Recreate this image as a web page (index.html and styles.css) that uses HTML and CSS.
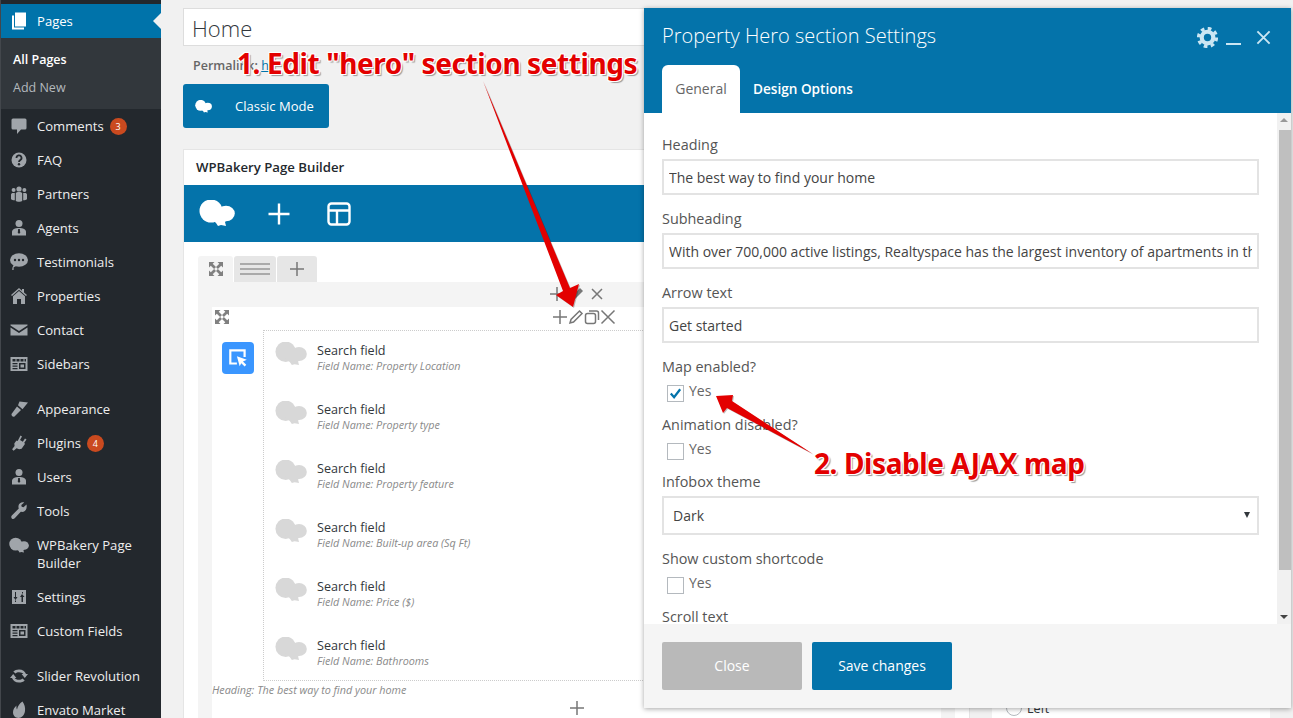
FILE: index.html
```html
<!DOCTYPE html>
<html lang="en">
<head>
<meta charset="utf-8">
<title>Edit Page</title>
<link rel="stylesheet" href="styles.css">
</head>
<body>
<svg class="sprite" aria-hidden="true">
  <symbol id="i-cloud" viewBox="0 0 36 27"><circle cx="12" cy="11" r="11.5"/><ellipse cx="27" cy="13.5" rx="8.8" ry="7.8"/><path d="M12 18h18l-4 4 1 4-5-1-3 1-2-3z"/></symbol>
  <symbol id="i-pages" viewBox="0 0 20 20"><path d="M6 1.500h11v14H6z"/><path d="M3 4.500h2V16.500h10v2H3z"/></symbol>
  <symbol id="i-comments" viewBox="0 0 20 20"><path d="M4 2.500h12a1.500 1.500 0 0 1 1.500 1.500v8a1.500 1.500 0 0 1-1.500 1.500h-4l-4 4.500v-4.500H4A1.500 1.500 0 0 1 2.500 12V4A1.500 1.500 0 0 1 4 2.500z"/></symbol>
  <symbol id="i-faq" viewBox="0 0 20 20"><circle cx="10" cy="10" r="7.500"/><path class="cut" d="M7.500 8a2.500 2.500 0 1 1 3.700 2.100c-.9.500-1.200 1-1.200 1.900"/><circle class="dot" cx="10" cy="14.300" r="1.200"/></symbol>
  <symbol id="i-partners" viewBox="0 0 20 20"><circle cx="10" cy="5" r="2.600"/><circle cx="4.600" cy="6" r="2"/><circle cx="15.400" cy="6" r="2"/><path d="M6.800 9.500c0-1 1.200-1.500 3.200-1.500s3.200.5 3.200 1.500V17c-1 1-5.400 1-6.400 0z"/><path d="M5.800 9v7.300c-1.800 0-3.300-.5-3.800-1V10.500C2 9.200 3.200 8.600 5.800 9zM14.200 9v7.300c1.800 0 3.300-.5 3.800-1V10.500c0-1.300-1.200-1.900-3.800-1.500z"/></symbol>
  <symbol id="i-agent" viewBox="0 0 20 20"><circle cx="10" cy="5.500" r="3.500"/><path d="M3 17.500V14c0-2.700 3-4 7-4s7 1.300 7 4v3.500z"/><path class="cut-fill" d="M9.200 11h1.600l.4 3.500-1.200 1.500-1.200-1.500z"/></symbol>
  <symbol id="i-bubble" viewBox="0 0 20 20"><ellipse cx="10" cy="8" rx="9" ry="6.800"/><path d="M5 12l2 2-2.500 1.500.3 2.300-1.600.2.300-2.500z"/><circle class="dot" cx="6" cy="8" r="1.200"/><circle class="dot" cx="10" cy="8" r="1.200"/><circle class="dot" cx="14" cy="8" r="1.200"/></symbol>
  <symbol id="i-house" viewBox="0 0 20 20"><path d="M4 10.300l6-5.300 6 5.300V18H12v-5H8v5H4z"/><path d="M10 2L2 9l1 1 7-6.200L17 10l1-1-3-2.600V3h-2v1.700z"/></symbol>
  <symbol id="i-mail" viewBox="0 0 20 20"><path d="M1.500 4.500h17v1L10 11 1.500 5.500z"/><path d="M1.500 7.500L10 13l8.500-5.500v8h-17z"/></symbol>
  <symbol id="i-table" viewBox="0 0 20 20"><path fill-rule="evenodd" d="M1.500 3h17v14h-17zM3.500 5v2.500h3V5zm4 0v2.500h3V5zm4 0v2.500h3V5zm4 0v2.500h1.500V5zM3.500 9v1.200h5V9zm0 2.500v1.200h5v-1.200zm0 2.500v1.200h5V14zm6.500-5v6h6.500V9zm1.500 1.500h3.500v3h-3.500z"/></symbol>
  <symbol id="i-brush" viewBox="0 0 20 20"><path d="M10.500 2.500l8.500 1-5.500 6.800-4.500-4z"/><path d="M8 7.500l4 3.500-6.500 6.500c-1.500 1-3.800-1.200-2.800-2.700z"/></symbol>
  <symbol id="i-plug" viewBox="0 0 20 20"><path d="M11.500 2.500l1.500 1-2 3.500 2.800 1.800 2.200-3.300 1.500 1-2.400 3.500 1 .8-3.500 5-2.500.5-2.500-1-3 2.400-1.500-1.500 2.500-3.100-.3-2.500 1.400-2 1-1.200 1 .7z"/></symbol>
  <symbol id="i-wrench" viewBox="0 0 20 20"><path d="M17.500 3.500l-3 2.800-1.800-.6-.4-1.800 2.900-2.500c-2.200-.8-5.300.5-5.700 3.300-.1 1-.1 1.800.3 2.700L2.800 14.500c-.9 1.100-.6 2.300 0 2.900.8.700 1.900.8 2.900-.1l6.100-6.500c3.400.9 6.800-2 5.700-7.300z"/></symbol>
  <symbol id="i-sliders" viewBox="0 0 20 20"><path fill-rule="evenodd" d="M3 3h14v14H3zM6 5v5H4.500L6.500 13 8.500 10H7V5zM6 13.500V15h1v-1.500zM13 5v1.500h1V5zM13 7l-2 3h1.500v5h1.500v-5H15.500z"/></symbol>
  <symbol id="i-refresh" viewBox="0 0 20 20"><path d="M10 3.500c3.600 0 6 2 7 4.500h2l-3.200 4-3.200-4h1.700c-.7-1-2.300-1.800-4.300-1.800-1.500 0-2.700.5-3.500 1.300L4.300 5.600C5.700 4.300 7.600 3.500 10 3.500z"/><path d="M10 16.500c-3.600 0-6-2-7-4.500H1l3.200-4 3.200 4H5.700c.7 1 2.300 1.800 4.300 1.800 1.500 0 2.700-.5 3.500-1.300l2.200 1.900c-1.400 1.300-3.300 2.100-5.700 2.100z"/></symbol>
  <symbol id="i-leaf" viewBox="0 0 20 20"><path d="M13.500 1.500c2 3 3 6 2.500 9.500-.5 4-3.200 7-6.500 7-3.500 0-5.500-2.700-5.500-5.700 0-2.800 1.500-5 3.500-6.800-.2 1.500-.2 2.800.5 4 .8-3.500 2.500-6 5.500-8z"/></symbol>
  <symbol id="i-expand" viewBox="0 0 16 16"><path d="M1 1h5.500L4.700 2.800 8 6.100 6.100 8 2.800 4.700 1 6.500zM15 1v5.500l-1.800-1.800L9.900 8 8 6.100l3.300-3.300L9.500 1zM1 15V9.500l1.800 1.800L6.100 8 8 9.900l-3.300 3.300L6.500 15zM15 15H9.500l1.800-1.800L8 9.900 9.900 8l3.300 3.300L15 9.500z"/></symbol>
</svg>

<div class="page">
  <nav class="sidebar">
    <a class="menu-item is-active"><svg class="mi"><use href="#i-pages"/></svg><span>Pages</span></a>
    <div class="submenu">
      <a class="sub-item is-current">All Pages</a>
      <a class="sub-item">Add New</a>
    </div>
    <a class="menu-item"><svg class="mi"><use href="#i-comments"/></svg><span>Comments</span><b class="badge">3</b></a>
    <a class="menu-item"><svg class="mi"><use href="#i-faq"/></svg><span>FAQ</span></a>
    <a class="menu-item"><svg class="mi"><use href="#i-partners"/></svg><span>Partners</span></a>
    <a class="menu-item"><svg class="mi"><use href="#i-agent"/></svg><span>Agents</span></a>
    <a class="menu-item"><svg class="mi"><use href="#i-bubble"/></svg><span>Testimonials</span></a>
    <a class="menu-item"><svg class="mi"><use href="#i-house"/></svg><span>Properties</span></a>
    <a class="menu-item"><svg class="mi"><use href="#i-mail"/></svg><span>Contact</span></a>
    <a class="menu-item"><svg class="mi"><use href="#i-table"/></svg><span>Sidebars</span></a>
    <div class="menu-sep"></div>
    <a class="menu-item"><svg class="mi"><use href="#i-brush"/></svg><span>Appearance</span></a>
    <a class="menu-item"><svg class="mi"><use href="#i-plug"/></svg><span>Plugins</span><b class="badge">4</b></a>
    <a class="menu-item"><svg class="mi"><use href="#i-agent"/></svg><span>Users</span></a>
    <a class="menu-item"><svg class="mi"><use href="#i-wrench"/></svg><span>Tools</span></a>
    <a class="menu-item is-tall"><svg class="mi"><use href="#i-cloud"/></svg><span>WPBakery Page Builder</span></a>
    <a class="menu-item"><svg class="mi"><use href="#i-sliders"/></svg><span>Settings</span></a>
    <a class="menu-item"><svg class="mi"><use href="#i-table"/></svg><span>Custom Fields</span></a>
    <div class="menu-sep"></div>
    <a class="menu-item"><svg class="mi"><use href="#i-refresh"/></svg><span>Slider Revolution</span></a>
    <a class="menu-item"><svg class="mi"><use href="#i-leaf"/></svg><span>Envato Market</span></a>
  </nav>

  <main class="content">
    <div class="col-main">
      <div class="title-input">Home</div>
      <div class="permalink">Permalink: <a>h</a></div>
      <button class="classic-btn"><svg class="classic-cloud"><use href="#i-cloud"/></svg>Classic Mode</button>
      <section class="metabox">
        <h2 class="metabox-title">WPBakery Page Builder</h2>
        <div class="builder-bar">
          <svg class="bar-cloud"><use href="#i-cloud"/></svg>
          <svg class="bar-icon" viewBox="0 0 24 24"><path d="M12 1.500v21M1.500 12h21"/></svg>
          <svg class="bar-icon" viewBox="0 0 24 24"><rect x="1.500" y="1.500" width="21" height="21" rx="3"/><path d="M1.500 8.500h21M10 8.500v14"/></svg>
        </div>
        <div class="builder-body">
          <div class="tabs">
            <div class="tab tab-move"><svg class="expand"><use href="#i-expand"/></svg></div>
            <div class="tab tab-lines"><i></i></div>
            <div class="tab tab-plus"><svg class="ctl" viewBox="0 0 16 16"><path d="M8 1v14M1 8h14"/></svg></div>
          </div>
          <div class="section">
            <div class="section-controls">
              <svg class="ctl" viewBox="0 0 16 16"><path d="M8 1v14M1 8h14"/></svg>
              <svg class="ctl" viewBox="0 0 16 16"><path class="solid" d="M11 2l3 3-8 8-4 1 1-4z"/></svg>
              <svg class="ctl" viewBox="0 0 16 16"><path d="M3 3l10 10M13 3L3 13"/></svg>
            </div>
            <div class="row">
              <div class="row-head">
                <svg class="expand"><use href="#i-expand"/></svg>
                <div class="row-controls">
                  <svg class="ctl" viewBox="0 0 16 16"><path d="M8 1v14M1 8h14"/></svg>
                  <svg class="ctl" viewBox="0 0 16 16"><path d="M11.500 2l2.500 2.500-8.500 8.500-3.500 1 1-3.500z"/></svg>
                  <svg class="ctl" viewBox="0 0 16 16"><rect x="1.500" y="4.500" width="10" height="10" rx="2"/><path d="M5 2h7.500A2 2 0 0 1 14.500 4v7"/></svg>
                  <svg class="ctl" viewBox="0 0 16 16"><path d="M1.500 1.500l13 13M14.500 1.500l-13 13"/></svg>
                </div>
              </div>
              <div class="row-main">
                <div class="element-icon"><svg viewBox="0 0 20 20"><path class="ei-box" d="M9 15H3V3h13v6"/><path class="ei-arrow" d="M9 8.500l9 3.200-3.500 1.500 3 3-1.500 1.500-3-3L11.500 17.500z"/></svg></div>
                <div class="fields">
                  <div class="field-item"><svg class="fi-cloud"><use href="#i-cloud"/></svg><div><div class="fi-title">Search field</div><div class="fi-sub">Field Name: Property Location</div></div></div>
                  <div class="field-item"><svg class="fi-cloud"><use href="#i-cloud"/></svg><div><div class="fi-title">Search field</div><div class="fi-sub">Field Name: Property type</div></div></div>
                  <div class="field-item"><svg class="fi-cloud"><use href="#i-cloud"/></svg><div><div class="fi-title">Search field</div><div class="fi-sub">Field Name: Property feature</div></div></div>
                  <div class="field-item"><svg class="fi-cloud"><use href="#i-cloud"/></svg><div><div class="fi-title">Search field</div><div class="fi-sub">Field Name: Built-up area (Sq Ft)</div></div></div>
                  <div class="field-item"><svg class="fi-cloud"><use href="#i-cloud"/></svg><div><div class="fi-title">Search field</div><div class="fi-sub">Field Name: Price ($)</div></div></div>
                  <div class="field-item"><svg class="fi-cloud"><use href="#i-cloud"/></svg><div><div class="fi-title">Search field</div><div class="fi-sub">Field Name: Bathrooms</div></div></div>
                </div>
              </div>
              <div class="row-note">Heading: The best way to find your home</div>
              <div class="row-add"><svg class="ctl" viewBox="0 0 16 16"><path d="M8 1v14M1 8h14"/></svg></div>
            </div>
          </div>
        </div>
      </section>
    </div>
    <aside class="col-side">
      <div class="radio-row"><span class="radio"></span>Left</div>
    </aside>
  </main>

  <section class="modal">
    <header class="modal-head">
      <div class="modal-top">
        <h1 class="modal-title">Property Hero section Settings</h1>
        <div class="modal-tools">
          <svg class="tool-gear" viewBox="0 0 20 20"><circle class="gear-teeth" cx="10" cy="10" r="8.600"/><circle class="gear-ring" cx="10" cy="10" r="5.500"/></svg>
          <i class="tool-min"></i>
          <svg class="tool-close" viewBox="0 0 16 16"><path d="M1.500 1.500l13 13M14.500 1.500l-13 13"/></svg>
        </div>
      </div>
      <div class="modal-tabs">
        <a class="modal-tab is-on">General</a>
        <a class="modal-tab">Design Options</a>
      </div>
    </header>
    <div class="modal-body">
      <div class="form">
        <div class="group"><div class="label">Heading</div><div class="text-field"><span class="text-clip">The best way to find your home</span></div></div>
        <div class="group"><div class="label">Subheading</div><div class="text-field"><span class="text-clip">With over 700,000 active listings, Realtyspace has the largest inventory of apartments in the United States.</span></div></div>
        <div class="group"><div class="label">Arrow text</div><div class="text-field"><span class="text-clip">Get started</span></div></div>
        <div class="group"><div class="label">Map enabled?</div><div class="check-row"><span class="check"><svg viewBox="0 0 16 16"><path d="M3 8l3.500 4L13 3.500"/></svg></span>Yes</div></div>
        <div class="group group-tight"><div class="label">Animation disabled?</div><div class="check-row"><span class="check"></span>Yes</div></div>
        <div class="group"><div class="label">Infobox theme</div><div class="select-field">Dark<i class="caret"></i></div></div>
        <div class="group"><div class="label">Show custom shortcode</div><div class="check-row"><span class="check"></span>Yes</div></div>
        <div class="group"><div class="label">Scroll text</div></div>
      </div>
      <div class="scrollbar">
        <i class="sb-up"></i>
        <div class="sb-thumb"></div>
        <i class="sb-down"></i>
      </div>
    </div>
    <footer class="modal-foot">
      <button class="btn btn-close">Close</button>
      <button class="btn btn-save">Save changes</button>
    </footer>
  </section>

  <svg class="arrows" viewBox="0 0 1293 718">
    <path class="arrow-shadow" d="M483 81L570 288l9-4-6 23-17-12 7-4z"/>
    <path class="arrow" d="M483 81L570 288l9-4-6 23-17-12 7-4z"/>
    <path class="arrow-shadow" d="M813 454L732 401l1-6-17 1 7 17 4-5z"/>
    <path class="arrow" d="M813 454L732 401l1-6-17 1 7 17 4-5z"/>
  </svg>
  <div class="note note-one">1. Edit "hero" section settings</div>
  <div class="note note-two">2. Disable AJAX map</div>
</div>
</body>
</html>
```

FILE: styles.css
```css
* { box-sizing: border-box; }
html, body { margin: 0; padding: 0; }
body { background: #f1f1f1; font-family: "Open Sans", sans-serif; color: #444; }
.sprite { display: none; }
.page { position: relative; display: flex; width: 1293px; height: 718px; overflow: hidden; }

/* Sidebar */
.sidebar { flex: none; width: 161px; height: 718px; padding-top: 4px; background: #23282d; border-left: 1px solid #43474c; overflow: hidden; }
.menu-item { display: flex; align-items: center; height: 34px; padding-left: 8px; font-size: 13.100px; color: #eee; }
.menu-item span { margin-left: 8px; line-height: 18px; }
.mi { flex: none; width: 20px; height: 20px; fill: #a0a5aa; }
.is-tall { height: 52px; }
.is-tall span { width: 110px; }
.is-tall .mi { margin-bottom: 18px; height: 17px; }
.is-active { position: relative; background: #0073aa; color: #fff; }
.is-active .mi { fill: #fff; }
.is-active::after { content: ""; position: absolute; right: 0; top: 9px; border: 8px solid transparent; border-right-color: #f1f1f1; border-left: 0; }
.submenu { height: 71px; padding-top: 8px; background: #32373c; }
.sub-item { display: block; height: 28px; padding-left: 12px; font-size: 12.500px; line-height: 28px; color: #b4b9be; }
.is-current { color: #fff; font-weight: 600; }
.menu-sep { height: 11px; }
.badge { display: block; width: 17px; height: 17px; margin-left: 6px; border-radius: 50%; background: #ca4a1f; color: #fff; font-size: 9px; font-weight: 400; line-height: 17px; text-align: center; }
.cut { fill: none; stroke: #23282d; stroke-width: 1.800; }
.cut-fill, .dot { fill: #23282d; }

/* Main content */
.content { flex: 1; display: flex; gap: 22px; padding: 8px 0 0 22px; min-width: 0; }
.col-main { flex: none; width: 787px; }
.col-side { flex: none; width: 278px; margin-top: 141px; padding: 549px 0 0 14px; background: #fff; }
.title-input { height: 38px; padding-left: 8px; background: #fff; border: 1px solid #ddd; font-size: 22px; line-height: 38px; font-weight: 300; color: #32373c; }
.permalink { height: 38px; padding-left: 10px; font-size: 12.500px; line-height: 40px; font-weight: 600; color: #666; }
.permalink a { color: #0073aa; font-weight: 400; text-decoration: underline; }
.classic-btn { display: flex; align-items: center; width: 146px; height: 44px; padding: 0 0 0 12px; border: 0; border-radius: 3px; background: #0473aa; color: #fff; font: 13px "Open Sans", sans-serif; }
.classic-cloud { width: 17px; height: 13px; margin-right: 23px; fill: #fff; }
.metabox { height: 620px; margin-top: 21px; background: #fff; border: 1px solid #e5e5e5; }
.metabox-title { height: 35px; margin: 0; padding-left: 12px; font-size: 13.200px; font-weight: 600; line-height: 35px; color: #23282d; }
.builder-bar { display: flex; align-items: center; gap: 32px; height: 57px; padding-left: 15px; background: #0473aa; }
.bar-cloud { width: 36px; height: 27px; fill: #fff; }
.bar-icon { width: 24px; height: 24px; fill: none; stroke: #fff; stroke-width: 2.400; }
.bar-icon + .bar-icon { margin-left: 4px; }
.builder-body { padding: 14px 14px 0; }
.tabs { display: flex; gap: 1px; height: 26px; }
.tab { display: flex; align-items: center; justify-content: center; border-radius: 3px 3px 0 0; background: #e6e6e6; }
.tab-move { width: 35px; background: #f4f4f4; }
.tab-lines { width: 42px; }
.tab-lines i { display: block; width: 30px; height: 12px; border-top: 2px solid #aaa; border-bottom: 2px solid #aaa; background: linear-gradient(#aaa, #aaa) center / 100% 2px no-repeat; }
.tab-plus { width: 40px; }
.expand { width: 16px; height: 16px; fill: #808080; }
.ctl { width: 16px; height: 16px; fill: none; stroke: #777; stroke-width: 1.500; }
.ctl .solid { fill: #777; stroke: none; }
.section { height: 436px; padding: 0 14px; background: #f4f4f4; }
.section-controls { display: flex; justify-content: flex-end; gap: 4px; height: 25px; padding: 4px 336px 0 0; }
.row { background: #fff; height: 411px; }
.row-head { display: flex; justify-content: space-between; height: 23px; padding: 2px 325px 0 2px; }
.row-controls { display: flex; gap: 0; }
.row-main { display: flex; }
.element-icon { flex: none; display: flex; align-items: center; justify-content: center; width: 32px; height: 32px; margin: 12px 9px 0 10px; border-radius: 4px; background: #3a96ff; }
.element-icon svg { width: 22px; height: 22px; }
.ei-box { fill: none; stroke: #fff; stroke-width: 2; }
.ei-arrow { fill: #fff; }
.fields { flex: 1; height: 351px; padding: 0 0 0 11px; border: 1px dotted #ccc; border-width: 1px 0 1px 1px; }
.field-item { display: flex; align-items: flex-start; gap: 10px; height: 59px; padding-top: 11px; }
.fi-cloud { flex: none; width: 32px; height: 24px; fill: #d8d8d8; }
.fi-title { font-size: 12.600px; line-height: 17px; color: #32373c; }
.fi-sub { font-size: 10.800px; line-height: 14px; font-style: italic; color: #8a8a8a; }
.row-note { height: 17px; margin-top: 2px; font-size: 10.800px; line-height: 14px; font-style: italic; color: #8a8a8a; }
.row-add { padding-left: 357px; margin-top: -1px; }
.radio-row { display: flex; align-items: center; gap: 5px; height: 20px; font-size: 12.500px; color: #32373c; }
.radio { width: 16px; height: 16px; border: 1px solid #b4b9be; border-radius: 50%; background: #fff; }

/* Modal */
.modal { position: absolute; left: 644px; top: 8px; display: flex; flex-direction: column; width: 647px; height: 700px; background: #fff; box-shadow: 0 1px 5px rgba(0, 0, 0, .35); }
.modal-head { flex: none; height: 105px; padding: 0 0 0 18px; background: #0473aa; }
.modal-top { display: flex; justify-content: space-between; height: 57px; }
.modal-title { margin: 0; padding-top: 13px; font-size: 20px; font-weight: 300; line-height: 30px; color: #fff; }
.modal-tools { display: flex; align-items: flex-start; padding: 19px 20px 0 0; }
.tool-gear { width: 21px; height: 21px; margin-right: 8px; fill: none; }
.gear-ring { stroke: #cbe6f3; stroke-width: 4; }
.gear-teeth { stroke: #cbe6f3; stroke-width: 3; stroke-dasharray: 3.500 3.250; }
.tool-min { width: 15px; height: 2px; margin: 16px 15px 0 0; background: #cbe6f3; }
.tool-close { width: 15px; height: 15px; margin-top: 3px; fill: none; stroke: #cbe6f3; stroke-width: 2; }
.modal-tabs { display: flex; height: 48px; gap: 0; }
.modal-tab { display: block; padding: 0 13px; font-size: 13.600px; line-height: 48px; font-weight: 600; color: #fff; }
.modal-tab.is-on { padding: 0; width: 78px; font-size: 14px; text-align: center; background: #fff; border-radius: 6px 6px 0 0; font-weight: 400; color: #666; }
.modal-body { flex: 1; display: flex; min-height: 0; overflow: hidden; }
.form { flex: 1; padding: 22px 18px 0 18px; overflow: hidden; }
.group { margin-bottom: 14px; }
.group-tight { margin-bottom: 13px; }
.label { height: 20px; margin-bottom: 4px; font-size: 14.400px; line-height: 20px; color: #555; }
.text-field { height: 36px; padding: 0 5px; border: 2px solid #e3e3e3; font-size: 14px; line-height: 34px; color: #444; }
.text-clip { display: block; overflow: hidden; white-space: nowrap; }
.select-field { position: relative; height: 39px; padding: 0 9px; border: 2px solid #e3e3e3; font-size: 14px; line-height: 35px; color: #444; }
.caret { position: absolute; right: 7px; top: 14px; border: 3.500px solid transparent; border-top: 6px solid #32373c; border-bottom: 0; }
.check-row { display: flex; height: 20px; padding-left: 5px; font-size: 14px; line-height: 20px; color: #666; }
.check { flex: none; width: 17px; height: 17px; margin: 4px 5px 0 0; border: 1px solid #b4b9be; background: #fff; }
.check svg { display: block; fill: none; stroke: #0473aa; stroke-width: 2.400; }
.scrollbar { position: relative; flex: none; width: 14px; background: #f1f1f1; }
.sb-up, .sb-down { position: absolute; left: 3px; border: 4px solid transparent; }
.sb-up { top: 5px; border-bottom: 4px solid #999; border-top: 0; }
.sb-down { bottom: 5px; border-top: 4px solid #444; border-bottom: 0; }
.sb-thumb { position: absolute; left: 2px; right: 0; top: 17px; height: 440px; background: #bfbfbf; }
.modal-foot { flex: none; display: flex; gap: 10px; height: 84px; padding: 18px; background: #f5f5f5; }
.btn { width: 140px; height: 48px; padding: 0 0 2px; border: 0; border-radius: 2px; color: #fff; font: 14px "Open Sans", sans-serif; }
.btn-close { background: #b9b9b9; }
.btn-save { background: #0473aa; }

/* Annotations over the page */
.arrows { position: absolute; left: 0; top: 0; width: 1293px; height: 718px; pointer-events: none; }
.arrow { fill: #e30000; }
.arrow-shadow { fill: rgba(0, 0, 0, .25); transform: translate(1px, 1px); }
.note { position: absolute; font-family: "Noto Sans", sans-serif; font-weight: 700; font-size: 28px; letter-spacing: -.4px; line-height: 38px; color: #e30000; white-space: nowrap; text-shadow: 1px 1px 0 #fff, -1px -1px 0 #fff, 1px -1px 0 #fff, -1px 1px 0 #fff, 2px 2px 1px #999; }
.note-one { left: 237px; top: 44px; }
.note-two { left: 814px; top: 444px; }
```
